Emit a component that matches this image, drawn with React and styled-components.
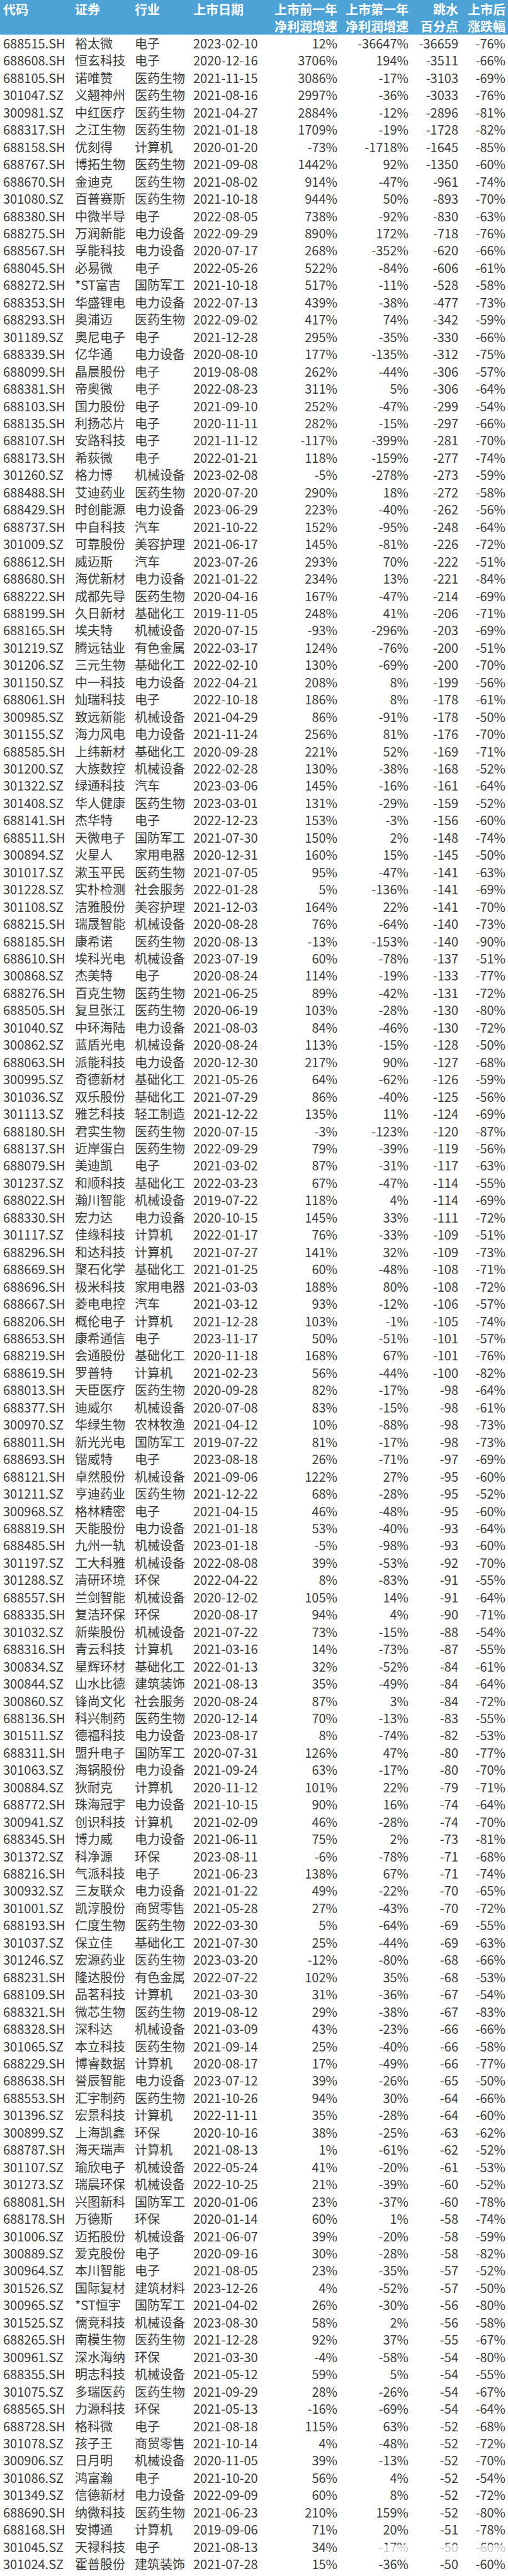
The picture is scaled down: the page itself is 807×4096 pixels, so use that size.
import styled, { createGlobalStyle } from "styled-components";

const GlobalStyle = createGlobalStyle`
  html, body {
    margin: 0;
    padding: 0;
    background: #fff;
  }
  body {
    font-family: "Noto Sans CJK SC", "Noto Sans", sans-serif;
  }
`;

const raw = `688515.SH 裕太微 电子 2023-02-10 12% -36647% -36659 -76%
688608.SH 恒玄科技 电子 2020-12-16 3706% 194% -3511 -66%
688105.SH 诺唯赞 医药生物 2021-11-15 3086% -17% -3103 -69%
301047.SZ 义翘神州 医药生物 2021-08-16 2997% -36% -3033 -76%
300981.SZ 中红医疗 医药生物 2021-04-27 2884% -12% -2896 -81%
688317.SH 之江生物 医药生物 2021-01-18 1709% -19% -1728 -82%
688158.SH 优刻得 计算机 2020-01-20 -73% -1718% -1645 -85%
688767.SH 博拓生物 医药生物 2021-09-08 1442% 92% -1350 -60%
688670.SH 金迪克 医药生物 2021-08-02 914% -47% -961 -74%
301080.SZ 百普赛斯 医药生物 2021-10-18 944% 50% -893 -70%
688380.SH 中微半导 电子 2022-08-05 738% -92% -830 -63%
688275.SH 万润新能 电力设备 2022-09-29 890% 172% -718 -76%
688567.SH 孚能科技 电力设备 2020-07-17 268% -352% -620 -66%
688045.SH 必易微 电子 2022-05-26 522% -84% -606 -61%
688272.SH *ST富吉 国防军工 2021-10-18 517% -11% -528 -58%
688353.SH 华盛锂电 电力设备 2022-07-13 439% -38% -477 -73%
688293.SH 奥浦迈 医药生物 2022-09-02 417% 74% -342 -59%
301189.SZ 奥尼电子 电子 2021-12-28 295% -35% -330 -66%
688339.SH 亿华通 电力设备 2020-08-10 177% -135% -312 -75%
688099.SH 晶晨股份 电子 2019-08-08 262% -44% -306 -57%
688381.SH 帝奥微 电子 2022-08-23 311% 5% -306 -64%
688103.SH 国力股份 电子 2021-09-10 252% -47% -299 -54%
688135.SH 利扬芯片 电子 2020-11-11 282% -15% -297 -66%
688107.SH 安路科技 电子 2021-11-12 -117% -399% -281 -70%
688173.SH 希荻微 电子 2022-01-21 118% -159% -277 -74%
301260.SZ 格力博 机械设备 2023-02-08 -5% -278% -273 -59%
688488.SH 艾迪药业 医药生物 2020-07-20 290% 18% -272 -58%
688429.SH 时创能源 电力设备 2023-06-29 223% -40% -262 -56%
688737.SH 中自科技 汽车 2021-10-22 152% -95% -248 -64%
301009.SZ 可靠股份 美容护理 2021-06-17 145% -81% -226 -72%
688612.SH 威迈斯 汽车 2023-07-26 293% 70% -222 -51%
688680.SH 海优新材 电力设备 2021-01-22 234% 13% -221 -84%
688222.SH 成都先导 医药生物 2020-04-16 167% -47% -214 -69%
688199.SH 久日新材 基础化工 2019-11-05 248% 41% -206 -71%
688165.SH 埃夫特 机械设备 2020-07-15 -93% -296% -203 -69%
301219.SZ 腾远钴业 有色金属 2022-03-17 124% -76% -200 -51%
301206.SZ 三元生物 基础化工 2022-02-10 130% -69% -200 -70%
301150.SZ 中一科技 电力设备 2022-04-21 208% 8% -199 -56%
688061.SH 灿瑞科技 电子 2022-10-18 186% 8% -178 -61%
300985.SZ 致远新能 机械设备 2021-04-29 86% -91% -178 -50%
301155.SZ 海力风电 电力设备 2021-11-24 256% 81% -176 -70%
688585.SH 上纬新材 基础化工 2020-09-28 221% 52% -169 -71%
301200.SZ 大族数控 机械设备 2022-02-28 130% -38% -168 -52%
301322.SZ 绿通科技 汽车 2023-03-06 145% -16% -161 -64%
301408.SZ 华人健康 医药生物 2023-03-01 131% -29% -159 -52%
688141.SH 杰华特 电子 2022-12-23 153% -3% -156 -60%
688511.SH 天微电子 国防军工 2021-07-30 150% 2% -148 -74%
300894.SZ 火星人 家用电器 2020-12-31 160% 15% -145 -50%
301017.SZ 漱玉平民 医药生物 2021-07-05 95% -47% -141 -63%
301228.SZ 实朴检测 社会服务 2022-01-28 5% -136% -141 -69%
301108.SZ 洁雅股份 美容护理 2021-12-03 164% 22% -141 -70%
688215.SH 瑞晟智能 机械设备 2020-08-28 76% -64% -140 -73%
688185.SH 康希诺 医药生物 2020-08-13 -13% -153% -140 -90%
688610.SH 埃科光电 机械设备 2023-07-19 60% -78% -137 -51%
300868.SZ 杰美特 电子 2020-08-24 114% -19% -133 -77%
688276.SH 百克生物 医药生物 2021-06-25 89% -42% -131 -72%
688505.SH 复旦张江 医药生物 2020-06-19 103% -28% -130 -80%
301040.SZ 中环海陆 电力设备 2021-08-03 84% -46% -130 -72%
300862.SZ 蓝盾光电 机械设备 2020-08-24 113% -15% -128 -50%
688063.SH 派能科技 电力设备 2020-12-30 217% 90% -127 -68%
300995.SZ 奇德新材 基础化工 2021-05-26 64% -62% -126 -59%
301036.SZ 双乐股份 基础化工 2021-07-29 86% -40% -125 -56%
301113.SZ 雅艺科技 轻工制造 2021-12-22 135% 11% -124 -69%
688180.SH 君实生物 医药生物 2020-07-15 -3% -123% -120 -87%
688137.SH 近岸蛋白 医药生物 2022-09-29 79% -39% -119 -56%
688079.SH 美迪凯 电子 2021-03-02 87% -31% -117 -63%
301237.SZ 和顺科技 基础化工 2022-03-23 67% -47% -114 -55%
688022.SH 瀚川智能 机械设备 2019-07-22 118% 4% -114 -69%
688330.SH 宏力达 电力设备 2020-10-15 145% 33% -111 -72%
301117.SZ 佳缘科技 计算机 2022-01-17 76% -33% -109 -51%
688296.SH 和达科技 计算机 2021-07-27 141% 32% -109 -73%
688669.SH 聚石化学 基础化工 2021-01-25 60% -48% -108 -71%
688696.SH 极米科技 家用电器 2021-03-03 188% 80% -108 -72%
688667.SH 菱电电控 汽车 2021-03-12 93% -12% -106 -57%
688206.SH 概伦电子 计算机 2021-12-28 103% -1% -105 -74%
688653.SH 康希通信 电子 2023-11-17 50% -51% -101 -57%
688219.SH 会通股份 基础化工 2020-11-18 168% 67% -101 -76%
688619.SH 罗普特 计算机 2021-02-23 56% -44% -100 -82%
688013.SH 天臣医疗 医药生物 2020-09-28 82% -17% -98 -64%
688377.SH 迪威尔 机械设备 2020-07-08 83% -15% -98 -61%
300970.SZ 华绿生物 农林牧渔 2021-04-12 10% -88% -98 -73%
688011.SH 新光光电 国防军工 2019-07-22 81% -17% -98 -73%
688693.SH 锴威特 电子 2023-08-18 26% -71% -97 -69%
688121.SH 卓然股份 机械设备 2021-09-06 122% 27% -95 -60%
301211.SZ 亨迪药业 医药生物 2021-12-22 68% -28% -95 -52%
300968.SZ 格林精密 电子 2021-04-15 46% -48% -95 -60%
688819.SH 天能股份 电力设备 2021-01-18 53% -40% -93 -64%
688485.SH 九州一轨 机械设备 2023-01-18 -5% -98% -93 -60%
301197.SZ 工大科雅 机械设备 2022-08-08 39% -53% -92 -70%
301288.SZ 清研环境 环保 2022-04-22 8% -83% -91 -55%
688557.SH 兰剑智能 机械设备 2020-12-02 105% 14% -91 -64%
688335.SH 复洁环保 环保 2020-08-17 94% 4% -90 -71%
301032.SZ 新柴股份 机械设备 2021-07-22 73% -15% -88 -54%
688316.SH 青云科技 计算机 2021-03-16 14% -73% -87 -55%
300834.SZ 星辉环材 基础化工 2022-01-13 32% -52% -84 -61%
300844.SZ 山水比德 建筑装饰 2021-08-13 35% -49% -84 -64%
300860.SZ 锋尚文化 社会服务 2020-08-24 87% 3% -84 -72%
688136.SH 科兴制药 医药生物 2020-12-14 70% -13% -83 -55%
301511.SZ 德福科技 电力设备 2023-08-17 8% -74% -82 -53%
688311.SH 盟升电子 国防军工 2020-07-31 126% 47% -80 -77%
301063.SZ 海锅股份 电力设备 2021-09-24 63% -17% -80 -70%
300884.SZ 狄耐克 计算机 2020-11-12 101% 22% -79 -71%
688772.SH 珠海冠宇 电力设备 2021-10-15 90% 16% -74 -64%
300941.SZ 创识科技 计算机 2021-02-09 46% -28% -74 -70%
688345.SH 博力威 电力设备 2021-06-11 75% 2% -73 -81%
301372.SZ 科净源 环保 2023-08-11 -6% -78% -71 -68%
688216.SH 气派科技 电子 2021-06-23 138% 67% -71 -74%
300932.SZ 三友联众 电力设备 2021-01-22 49% -22% -70 -65%
301001.SZ 凯淳股份 商贸零售 2021-05-28 27% -43% -70 -72%
688193.SH 仁度生物 医药生物 2022-03-30 5% -64% -69 -55%
301037.SZ 保立佳 基础化工 2021-07-30 25% -44% -69 -63%
301246.SZ 宏源药业 医药生物 2023-03-20 -12% -80% -68 -66%
688231.SH 隆达股份 有色金属 2022-07-22 102% 35% -68 -53%
688109.SH 品茗科技 计算机 2021-03-30 31% -36% -67 -54%
688321.SH 微芯生物 医药生物 2019-08-12 29% -38% -67 -83%
688328.SH 深科达 机械设备 2021-03-09 43% -23% -66 -66%
301065.SZ 本立科技 医药生物 2021-09-14 25% -40% -66 -58%
688229.SH 博睿数据 计算机 2020-08-17 17% -49% -66 -77%
688638.SH 誉辰智能 电力设备 2023-07-12 39% -26% -65 -50%
688553.SH 汇宇制药 医药生物 2021-10-26 94% 30% -64 -66%
301396.SZ 宏景科技 计算机 2022-11-11 35% -28% -64 -60%
300899.SZ 上海凯鑫 环保 2020-10-16 38% -25% -63 -62%
688787.SH 海天瑞声 计算机 2021-08-13 1% -61% -62 -52%
301107.SZ 瑜欣电子 机械设备 2022-05-24 41% -20% -61 -53%
301273.SZ 瑞晨环保 机械设备 2022-10-25 21% -39% -60 -52%
688081.SH 兴图新科 国防军工 2020-01-06 23% -37% -60 -78%
688178.SH 万德斯 环保 2020-01-14 60% 1% -58 -74%
301006.SZ 迈拓股份 机械设备 2021-06-07 39% -20% -58 -59%
300889.SZ 爱克股份 电子 2020-09-16 30% -28% -58 -82%
300964.SZ 本川智能 电子 2021-08-05 23% -35% -57 -52%
301526.SZ 国际复材 建筑材料 2023-12-26 4% -52% -57 -50%
300965.SZ *ST恒宇 国防军工 2021-04-02 26% -30% -56 -80%
301525.SZ 儒竞科技 机械设备 2023-08-30 58% 2% -56 -58%
688265.SH 南模生物 医药生物 2021-12-28 92% 37% -55 -67%
300961.SZ 深水海纳 环保 2021-03-30 -4% -58% -54 -80%
688355.SH 明志科技 机械设备 2021-05-12 59% 5% -54 -55%
301075.SZ 多瑞医药 医药生物 2021-09-29 28% -26% -54 -67%
688565.SH 力源科技 环保 2021-05-13 -16% -69% -54 -64%
688728.SH 格科微 电子 2021-08-18 115% 63% -52 -68%
301078.SZ 孩子王 商贸零售 2021-10-14 4% -48% -52 -72%
300906.SZ 日月明 机械设备 2020-11-05 39% -13% -52 -70%
301086.SZ 鸿富瀚 电子 2021-10-20 56% 4% -52 -54%
301349.SZ 信德新材 电力设备 2022-09-09 60% 8% -52 -72%
688690.SH 纳微科技 医药生物 2021-06-23 210% 159% -52 -80%
688168.SH 安博通 计算机 2019-09-06 71% 20% -51 -78%
301045.SZ 天禄科技 电子 2021-08-13 34% -17% -50 -60%
301024.SZ 霍普股份 建筑装饰 2021-07-28 15% -36% -50 -60%`;

const rows = raw.split("\n").map((line) => line.trim().split(/\s+/));

const columns = "114px 95px 93px 113px 116px 113px 79px 75px";

const Page = styled.div`
  position: relative;
  width: 807px;
  background: #fff;
`;

const Header = styled.div`
  display: grid;
  grid-template-columns: ${columns};
  padding-left: 5px;
  height: 55px;
  background: #4ea3d6;
  color: #fff;
  font-size: 20px;
  font-weight: 700;
  line-height: 27px;
`;

const HeadCell = styled.div`
  display: flex;
  flex-direction: column;
  align-items: ${(p) => (p.$right ? "flex-end" : "flex-start")};
  padding-top: 1px;
  white-space: nowrap;
`;

const Row = styled.div`
  display: grid;
  grid-template-columns: ${columns};
  padding-left: 5px;
  height: 27.46px;
  align-items: center;
  color: #3a3a3a;
  font-size: 20px;
  line-height: 27.46px;
`;

const Cell = styled.div`
  white-space: nowrap;
  text-align: ${(p) => (p.$right ? "right" : "left")};
`;

const Watermark = styled.div`
  position: absolute;
  right: 0;
  bottom: 22px;
  width: 205px;
  height: 22px;
  background: rgba(255, 255, 255, 0.72);
`;

const heads = [
  ["代码"],
  ["证券"],
  ["行业"],
  ["上市日期"],
  ["上市前一年", "净利润增速"],
  ["上市第一年", "净利润增速"],
  ["跳水", "百分点"],
  ["上市后", "涨跌幅"],
];

export default function App() {
  return (
    <Page>
      <GlobalStyle />
      <Header>
        {heads.map((lines, i) => (
          <HeadCell key={i} $right={i >= 4}>
            {lines.map((t) => (
              <span key={t}>{t}</span>
            ))}
          </HeadCell>
        ))}
      </Header>
      {rows.map((r) => (
        <Row key={r[0]}>
          {r.map((v, i) => (
            <Cell key={i} $right={i >= 4}>
              {v}
            </Cell>
          ))}
        </Row>
      ))}
      <Watermark />
    </Page>
  );
}
